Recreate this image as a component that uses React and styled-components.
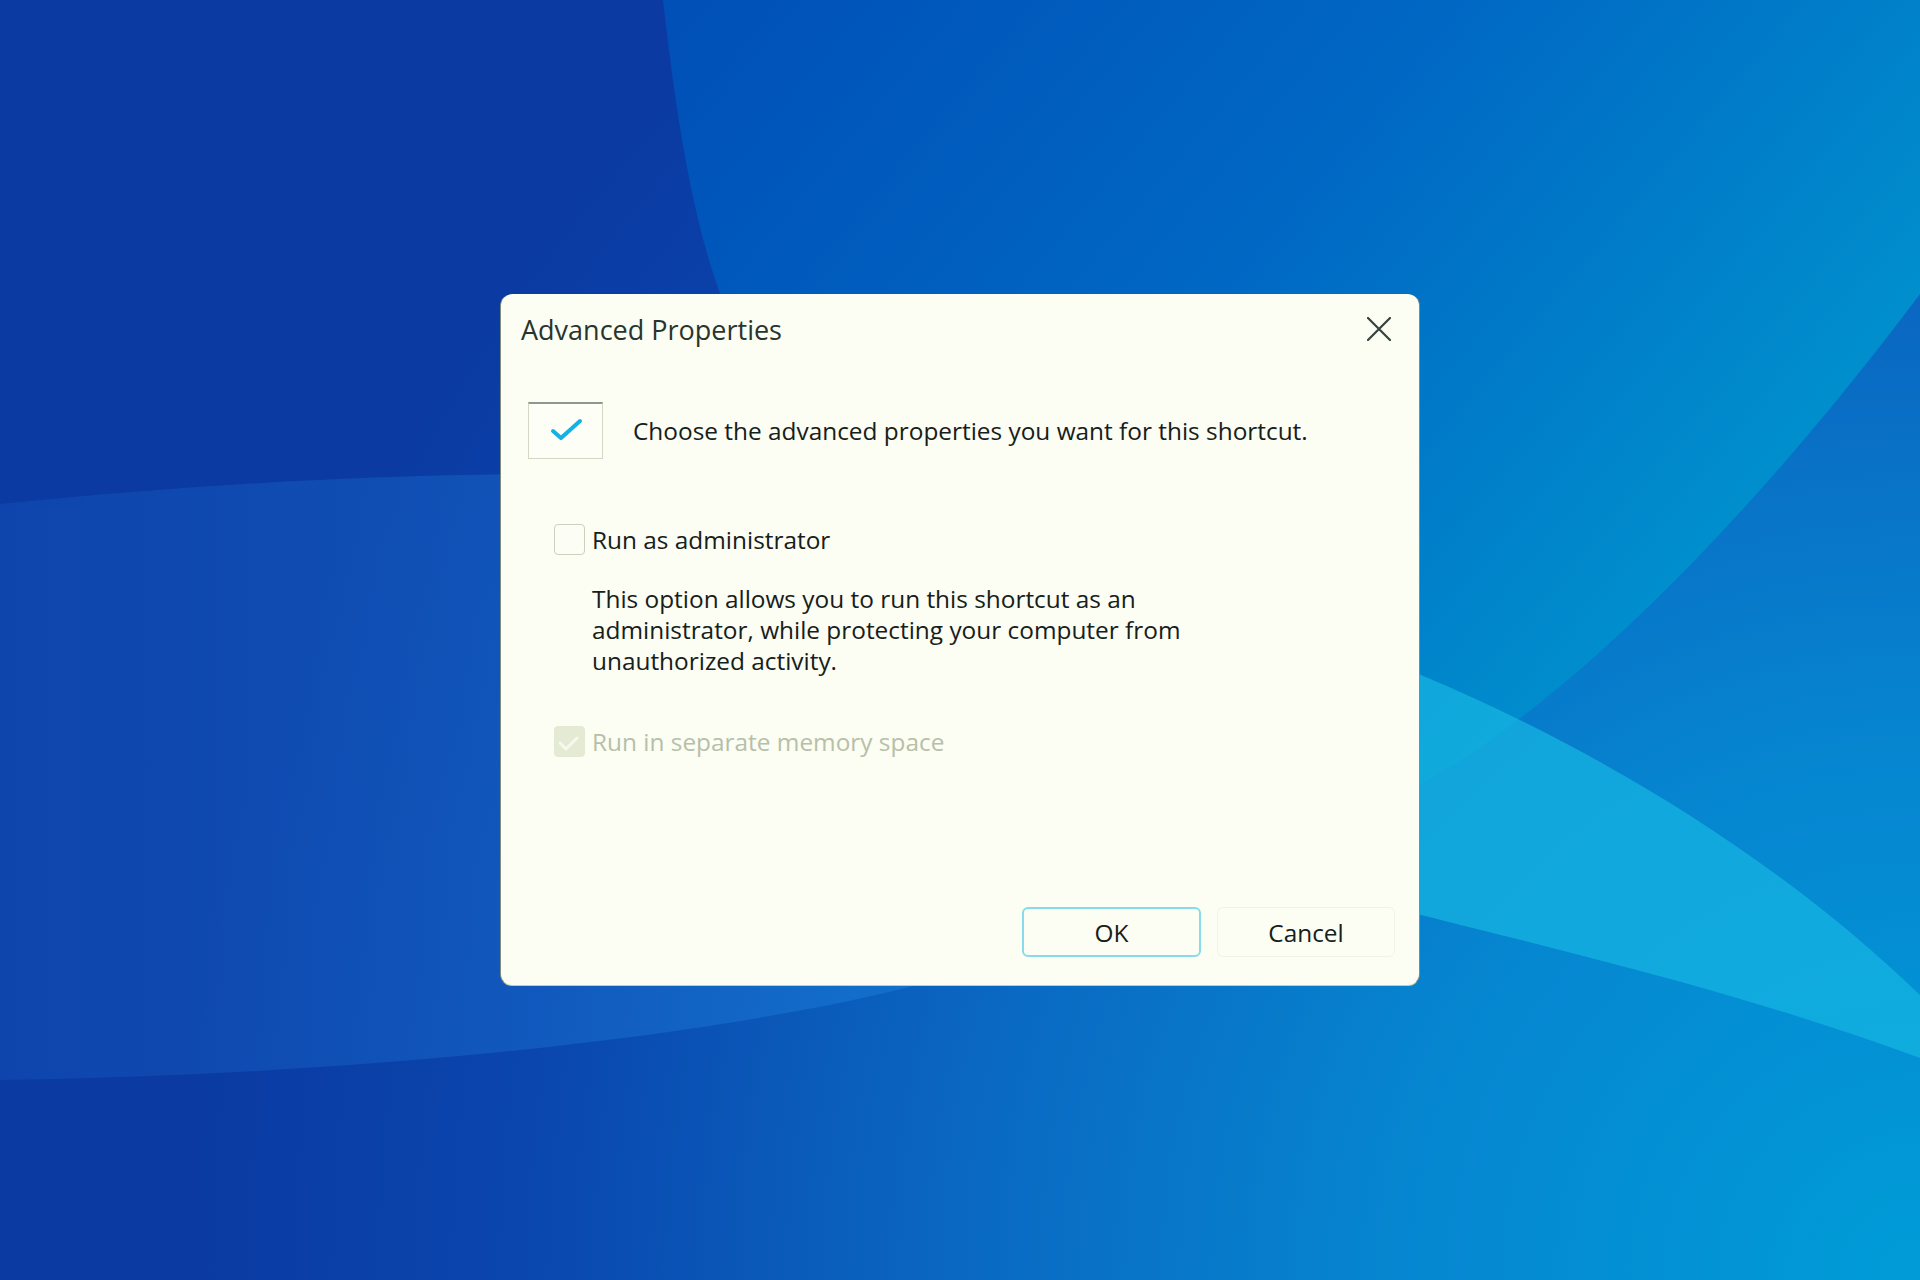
import React from 'react'
import styled, { createGlobalStyle } from 'styled-components'

const GlobalStyle = createGlobalStyle`
  html, body {
    margin: 0;
    padding: 0;
    height: 100%;
    overflow: hidden;
  }
  #root {
    height: 100%;
  }
`

const Desktop = styled.div`
  position: relative;
  width: 100vw;
  height: 100vh;
  display: flex;
  align-items: center;
  justify-content: center;
  overflow: hidden;
  background: #0a3aa2;
  font-family: 'Open Sans', 'Noto Sans', sans-serif;
`

const Wallpaper = styled.svg`
  position: absolute;
  inset: 0;
  width: 100%;
  height: 100%;
`

const Dialog = styled.div`
  position: relative;
  width: 920px;
  height: 692px;
  box-sizing: border-box;
  display: flex;
  flex-direction: column;
  background: #fcfdf3;
  border-radius: 12px;
  border-left: 1px solid rgba(30, 50, 35, 0.55);
  border-right: 1px solid rgba(30, 50, 35, 0.55);
  border-bottom: 1px solid rgba(90, 120, 60, 0.35);
  color: #16201a;
`

const Header = styled.div`
  display: flex;
  align-items: center;
  justify-content: space-between;
  height: 70px;
  padding: 0 20px 0 20px;
`

const Title = styled.div`
  font-size: 27px;
  color: #28352e;
`

const CloseButton = styled.button`
  width: 40px;
  height: 40px;
  display: flex;
  align-items: center;
  justify-content: center;
  padding: 0;
  border: none;
  background: transparent;
  color: #36423c;
  cursor: pointer;
`

const Intro = styled.div`
  display: flex;
  align-items: center;
  gap: 30px;
  margin: 38px 0 0 27px;
`

const IconBox = styled.div`
  width: 75px;
  height: 57px;
  box-sizing: border-box;
  display: flex;
  align-items: center;
  justify-content: center;
  border: 1.5px solid #d2d8c4;
  border-top: 2px solid #8e988c;
  background: #fdfef6;
`

const Text = styled.div`
  font-size: 24.4px;
  line-height: 31px;
  color: ${({ disabled }) => (disabled ? '#b6c0a8' : '#16201a')};
`

const Options = styled.div`
  display: flex;
  flex-direction: column;
  padding-left: 53px;
`

const OptionRow = styled.label`
  display: flex;
  align-items: center;
  gap: 7px;
  margin-top: ${({ top }) => top}px;
`

const Box = styled.span`
  width: 31px;
  height: 31px;
  box-sizing: border-box;
  display: flex;
  align-items: center;
  justify-content: center;
  border-radius: 4px;
  border: 1.5px solid ${({ disabled }) => (disabled ? '#e3e9d3' : '#cbd1bf')};
  background: ${({ disabled }) => (disabled ? '#e4ead4' : '#fcfdf4')};
`

const Description = styled(Text)`
  width: 620px;
  margin: 28px 0 0 38px;
`

const Footer = styled.div`
  display: flex;
  justify-content: flex-end;
  gap: 16px;
  margin-top: auto;
  padding: 0 24px 28px 0;
`

const Button = styled.button`
  width: ${({ wide }) => wide}px;
  height: 50px;
  box-sizing: border-box;
  border-radius: 6px;
  border: ${({ primary }) => (primary ? '2px solid #86dbec' : '1.5px solid #f1f4e4')};
  background: #fcfdf3;
  font-family: 'Open Sans', 'Noto Sans', sans-serif;
  font-size: 24.4px;
  color: #16201a;
  cursor: pointer;
`

const IntroIcon = () => (
  <IconBox>
    <svg width="72" height="53" viewBox="0 0 72 53">
      <path d="M23 26 L31 33 L50 16" fill="none" stroke="#12b2e6" strokeWidth="4" strokeLinecap="round" strokeLinejoin="round" />
    </svg>
  </IconBox>
)

const SmallCheck = () => (
  <svg width="28" height="28" viewBox="0 0 28 28">
    <path d="M4 15 L10 21 L21 10" fill="none" stroke="#f6f9ec" strokeWidth="3" strokeLinecap="round" strokeLinejoin="round" />
  </svg>
)

const CloseIcon = () => (
  <svg width="24" height="24" viewBox="0 0 24 24">
    <path d="M1 1 L23 23 M23 1 L1 23" stroke="currentColor" strokeWidth="2.2" strokeLinecap="round" />
  </svg>
)

const Background = () => (
  <Wallpaper viewBox="0 0 1920 1280" preserveAspectRatio="none">
    <defs>
      <radialGradient id="base" cx="1920" cy="1280" r="1750" gradientUnits="userSpaceOnUse">
        <stop offset="0" stopColor="#009cd8" />
        <stop offset="0.3" stopColor="#0686d0" />
        <stop offset="0.55" stopColor="#0a68c2" />
        <stop offset="0.8" stopColor="#0a46ae" />
        <stop offset="1" stopColor="#0a3aa2" />
      </radialGradient>
      <linearGradient id="bloom" x1="700" y1="0" x2="1600" y2="750" gradientUnits="userSpaceOnUse">
        <stop offset="0" stopColor="#0050b8" />
        <stop offset="0.5" stopColor="#0068c4" />
        <stop offset="1" stopColor="#0092ce" />
      </linearGradient>
      <linearGradient id="leftBand" x1="0" y1="0" x2="920" y2="0" gradientUnits="userSpaceOnUse">
        <stop offset="0" stopColor="#1e78dc" stopOpacity="0.18" />
        <stop offset="1" stopColor="#1e82dc" stopOpacity="0.45" />
      </linearGradient>
    </defs>
    <rect x="0" y="0" width="1920" height="1280" fill="url(#base)" />
    <path
      d="M663 0 C 680 150, 700 260, 740 340 C 900 600, 1200 800, 1420 784 C 1540 720, 1720 560, 1920 294 L 1920 0 Z"
      fill="url(#bloom)"
    />
    <path
      d="M0 504 C 200 484, 380 474, 560 474 L 918 480 L 918 985 C 700 1040, 350 1075, 0 1080 Z"
      fill="url(#leftBand)"
    />
    <path
      d="M1300 620 C 1340 640, 1380 655, 1421 675 C 1600 750, 1780 860, 1920 995 L 1920 1058 C 1750 995, 1560 950, 1421 915 C 1380 905, 1340 895, 1300 885 Z"
      fill="#16b6e2"
      fillOpacity="0.72"
    />
  </Wallpaper>
)

export default function App() {
  return (
    <>
      <GlobalStyle />
      <Desktop>
        <Background />
        <Dialog>
          <Header>
            <Title>Advanced Properties</Title>
            <CloseButton aria-label="Close">
              <CloseIcon />
            </CloseButton>
          </Header>
          <Intro>
            <IntroIcon />
            <Text>Choose the advanced properties you want for this shortcut.</Text>
          </Intro>
          <Options>
            <OptionRow top={65}>
              <Box />
              <Text>Run as administrator</Text>
            </OptionRow>
            <Description>
              This option allows you to run this shortcut as an administrator, while protecting your computer from
              unauthorized activity.
            </Description>
            <OptionRow top={50}>
              <Box disabled>
                <SmallCheck />
              </Box>
              <Text disabled>Run in separate memory space</Text>
            </OptionRow>
          </Options>
          <Footer>
            <Button primary wide={179}>OK</Button>
            <Button wide={178}>Cancel</Button>
          </Footer>
        </Dialog>
      </Desktop>
    </>
  )
}
